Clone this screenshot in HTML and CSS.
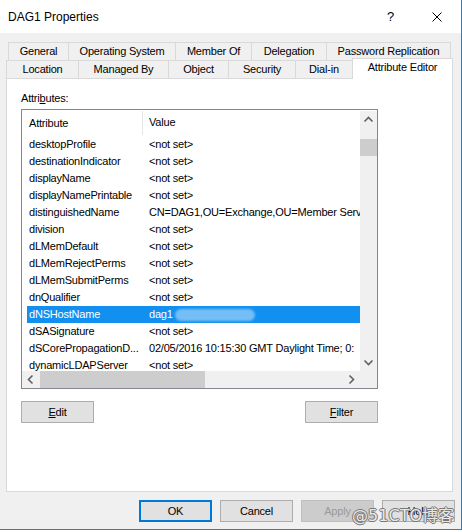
FILE: index.html
```html
<!DOCTYPE html>
<html>
<head>
<meta charset="utf-8">
<link rel="stylesheet" href="styles.css">
</head>
<body>
<div class="window">
  <div class="titlebar">
    <span class="title">DAG1 Properties</span>
    <span class="help-q">?</span>
    <svg class="close-x" width="10" height="10" viewBox="0 0 10 10"><path d="M0.5 0.5 L9.5 9.5 M9.5 0.5 L0.5 9.5" stroke="#000" stroke-width="1" fill="none"/></svg>
  </div>
  <div class="tabs">
    <div class="tabrow row1">
      <div class="tab t-general">General</div>
      <div class="tab t-os">Operating System</div>
      <div class="tab t-member">Member Of</div>
      <div class="tab t-deleg">Delegation</div>
      <div class="tab t-pass last">Password Replication</div>
    </div>
    <div class="tabrow row2">
      <div class="tab t-loc">Location</div>
      <div class="tab t-managed">Managed By</div>
      <div class="tab t-object">Object</div>
      <div class="tab t-security">Security</div>
      <div class="tab t-dial">Dial-in</div>
      <div class="tab t-attr last selected">Attribute Editor</div>
    </div>
  </div>
  <div class="panel">
    <div class="label">Attri<u>b</u>utes:</div>
    <div class="listbox">
      <div class="list-main">
        <div class="list-header">
          <div class="hcell hcell-attr">Attribute</div>
          <div class="hcell hcell-val">Value</div>
        </div>
        <div class="rows">
          <div class="row"><span class="c1">desktopProfile</span><span class="c2">&lt;not set&gt;</span></div>
          <div class="row"><span class="c1">destinationIndicator</span><span class="c2">&lt;not set&gt;</span></div>
          <div class="row"><span class="c1">displayName</span><span class="c2">&lt;not set&gt;</span></div>
          <div class="row"><span class="c1">displayNamePrintable</span><span class="c2">&lt;not set&gt;</span></div>
          <div class="row"><span class="c1">distinguishedName</span><span class="c2">CN=DAG1,OU=Exchange,OU=Member Servers,DC=corp,DC=local</span></div>
          <div class="row"><span class="c1">division</span><span class="c2">&lt;not set&gt;</span></div>
          <div class="row"><span class="c1">dLMemDefault</span><span class="c2">&lt;not set&gt;</span></div>
          <div class="row"><span class="c1">dLMemRejectPerms</span><span class="c2">&lt;not set&gt;</span></div>
          <div class="row"><span class="c1">dLMemSubmitPerms</span><span class="c2">&lt;not set&gt;</span></div>
          <div class="row"><span class="c1">dnQualifier</span><span class="c2">&lt;not set&gt;</span></div>
          <div class="row sel"><span class="c1">dNSHostName</span><span class="c2">dag1<span class="smudge"></span></span></div>
          <div class="row"><span class="c1">dSASignature</span><span class="c2">&lt;not set&gt;</span></div>
          <div class="row"><span class="c1">dSCorePropagationD...</span><span class="c2">02/05/2016 10:15:30 GMT Daylight Time; 0:</span></div>
          <div class="row"><span class="c1">dynamicLDAPServer</span><span class="c2">&lt;not set&gt;</span></div>
        </div>
      </div>
      <div class="vscroll">
        <svg class="arrow" width="17" height="17" viewBox="0 0 17 17"><path d="M4.5 10.5 L8.5 6.5 L12.5 10.5" stroke="#606060" stroke-width="1.6" fill="none"/></svg>
        <div class="vthumb"></div>
        <div class="vspace"></div>
        <svg class="arrow" width="17" height="17" viewBox="0 0 17 17"><path d="M4.5 6.5 L8.5 10.5 L12.5 6.5" stroke="#606060" stroke-width="1.6" fill="none"/></svg>
      </div>
      <div class="hscroll">
        <svg class="arrow" width="17" height="17" viewBox="0 0 17 17"><path d="M10.5 4.5 L6.5 8.5 L10.5 12.5" stroke="#606060" stroke-width="1.6" fill="none"/></svg>
        <div class="hthumb"></div>
        <div class="hspace"></div>
        <svg class="arrow" width="17" height="17" viewBox="0 0 17 17"><path d="M6.5 4.5 L10.5 8.5 L6.5 12.5" stroke="#606060" stroke-width="1.6" fill="none"/></svg>
      </div>
      <div class="corner"></div>
    </div>
    <div class="panel-buttons">
      <div class="btn"><u>E</u>dit</div>
      <div class="btn"><u>F</u>ilter</div>
    </div>
  </div>
  <div class="dialog-buttons">
    <div class="btn btn-default">OK</div>
    <div class="btn">Cancel</div>
    <div class="btn btn-disabled">Apply</div>
    <div class="btn">Help</div>
    <div class="watermark">@51CTO博客</div>
  </div>
</div>
</body>
</html>
```
FILE: styles.css
```css
* { box-sizing: border-box; }
html, body { margin: 0; padding: 0; }
body {
  width: 462px;
  height: 532px;
  background: #ffffff;
  font-family: "Liberation Sans", Arial, sans-serif;
  font-size: 11px;
  letter-spacing: -0.2px;
  color: #000;
  overflow: hidden;
}
.window {
  width: 462px;
  height: 530px;
  background: #f0f0f0;
  border-right: 1px solid #1883d7;
  border-bottom: 1px solid #1883d7;
}
.titlebar {
  height: 33px;
  background: #fff;
  display: flex;
  align-items: center;
  padding-left: 8px;
}
.title {
  font-size: 12px;
  letter-spacing: 0;
  flex: 1;
  padding-top: 1px;
}
.help-q {
  font-size: 13px;
  margin-right: 38px;
}
.close-x {
  margin-right: 19px;
}
.tabs {
  padding-top: 9px;
}
.tabrow {
  display: flex;
  height: 18px;
}
.row1 { margin-left: 8px; }
.row2 { margin-left: 6px; }
.tab {
  height: 18px;
  line-height: 17px;
  text-align: center;
  border-top: 1px solid #d9d9d9;
  border-left: 1px solid #d9d9d9;
  background: #f0f0f0;
  white-space: nowrap;
  flex: none;
}
.tab.last { border-right: 1px solid #d9d9d9; }
.t-general { width: 60px; }
.t-os { width: 107px; }
.t-member { width: 76px; }
.t-deleg { width: 75px; }
.t-pass { width: 125px; }
.t-loc { width: 72px; }
.t-managed { width: 90px; }
.t-object { width: 60px; }
.t-security { width: 67px; }
.t-dial { width: 57px; }
.t-attr { width: 101px; }
.tab.selected {
  height: 21px;
  margin-top: -2px;
  background: #fff;
  position: relative;
  z-index: 2;
  line-height: 17px;
}
.panel {
  margin-left: 6px;
  width: 447px;
  height: 414px;
  background: #fff;
  border: 1px solid #d9d9d9;
  padding: 13px 0 0 14px;
}
.label {
  line-height: 13px;
  margin-bottom: 4px;
}
.listbox {
  width: 357px;
  height: 280px;
  border: 1px solid #828790;
  display: grid;
  grid-template-columns: 338px 17px;
  grid-template-rows: 261px 17px;
}
.list-main {
  overflow: hidden;
  background: #fff;
}
.list-header {
  display: flex;
  height: 26px;
  align-items: stretch;
}
.hcell {
  line-height: 24px;
}
.hcell-attr {
  width: 121px;
  padding-left: 7px;
  border-right: 1px solid #e5e5e5;
  margin: 1px 0 1px 0;
}
.hcell-val {
  padding-left: 6px;
}
.rows {
  margin-left: 5px;
}
.row {
  display: flex;
  height: 17px;
  line-height: 17px;
  white-space: nowrap;
}
.c1 {
  width: 115px;
  flex: none;
  padding-left: 2px;
  overflow: hidden;
}
.c2 {
  padding-left: 7px;
  flex: none;
  display: flex;
  align-items: center;
}
.row.sel {
  background: #1190ef;
  color: #fff;
}
.smudge {
  display: inline-block;
  width: 80px;
  height: 12px;
  margin-left: 2px;
  border-radius: 6px;
  background: #74bdf5;
  filter: blur(1px);
}
.vscroll {
  background: #f0f0f0;
  display: flex;
  flex-direction: column;
  margin-top: 1px;
}
.vthumb {
  height: 17px;
  margin-top: 11px;
  background: #cdcdcd;
}
.vspace { flex: 1; }
.hscroll {
  background: #f0f0f0;
  display: flex;
}
.hthumb {
  width: 165px;
  margin-left: 1px;
  background: #cdcdcd;
}
.hspace { flex: 1; }
.arrow { display: block; flex: none; }
.corner { background: #f0f0f0; }
.panel-buttons {
  width: 357px;
  display: flex;
  justify-content: space-between;
  margin-top: 12px;
}
.btn {
  width: 73px;
  height: 22px;
  background: #e1e1e1;
  border: 1px solid #adadad;
  text-align: center;
  line-height: 20px;
}
.dialog-buttons {
  display: flex;
  justify-content: flex-end;
  gap: 8px;
  margin-top: 8px;
  padding-right: 6px;
  position: relative;
}
.btn-default {
  border: 2px solid #0078d7;
  line-height: 18px;
}
.btn-disabled {
  background: #cccccc;
  border-color: #bfbfbf;
  color: #9a9a9a;
}
.watermark {
  position: absolute;
  right: 7px;
  top: 2px;
  font-family: "DejaVu Sans", "Noto Sans CJK SC", sans-serif;
  font-size: 16px;
  letter-spacing: 0;
  color: rgba(255,255,255,0.85);
  text-shadow: 1px 0 0 #777, -1px 0 0 #777, 0 1px 0 #777, 0 -1px 0 #777;
  white-space: nowrap;
}
```
